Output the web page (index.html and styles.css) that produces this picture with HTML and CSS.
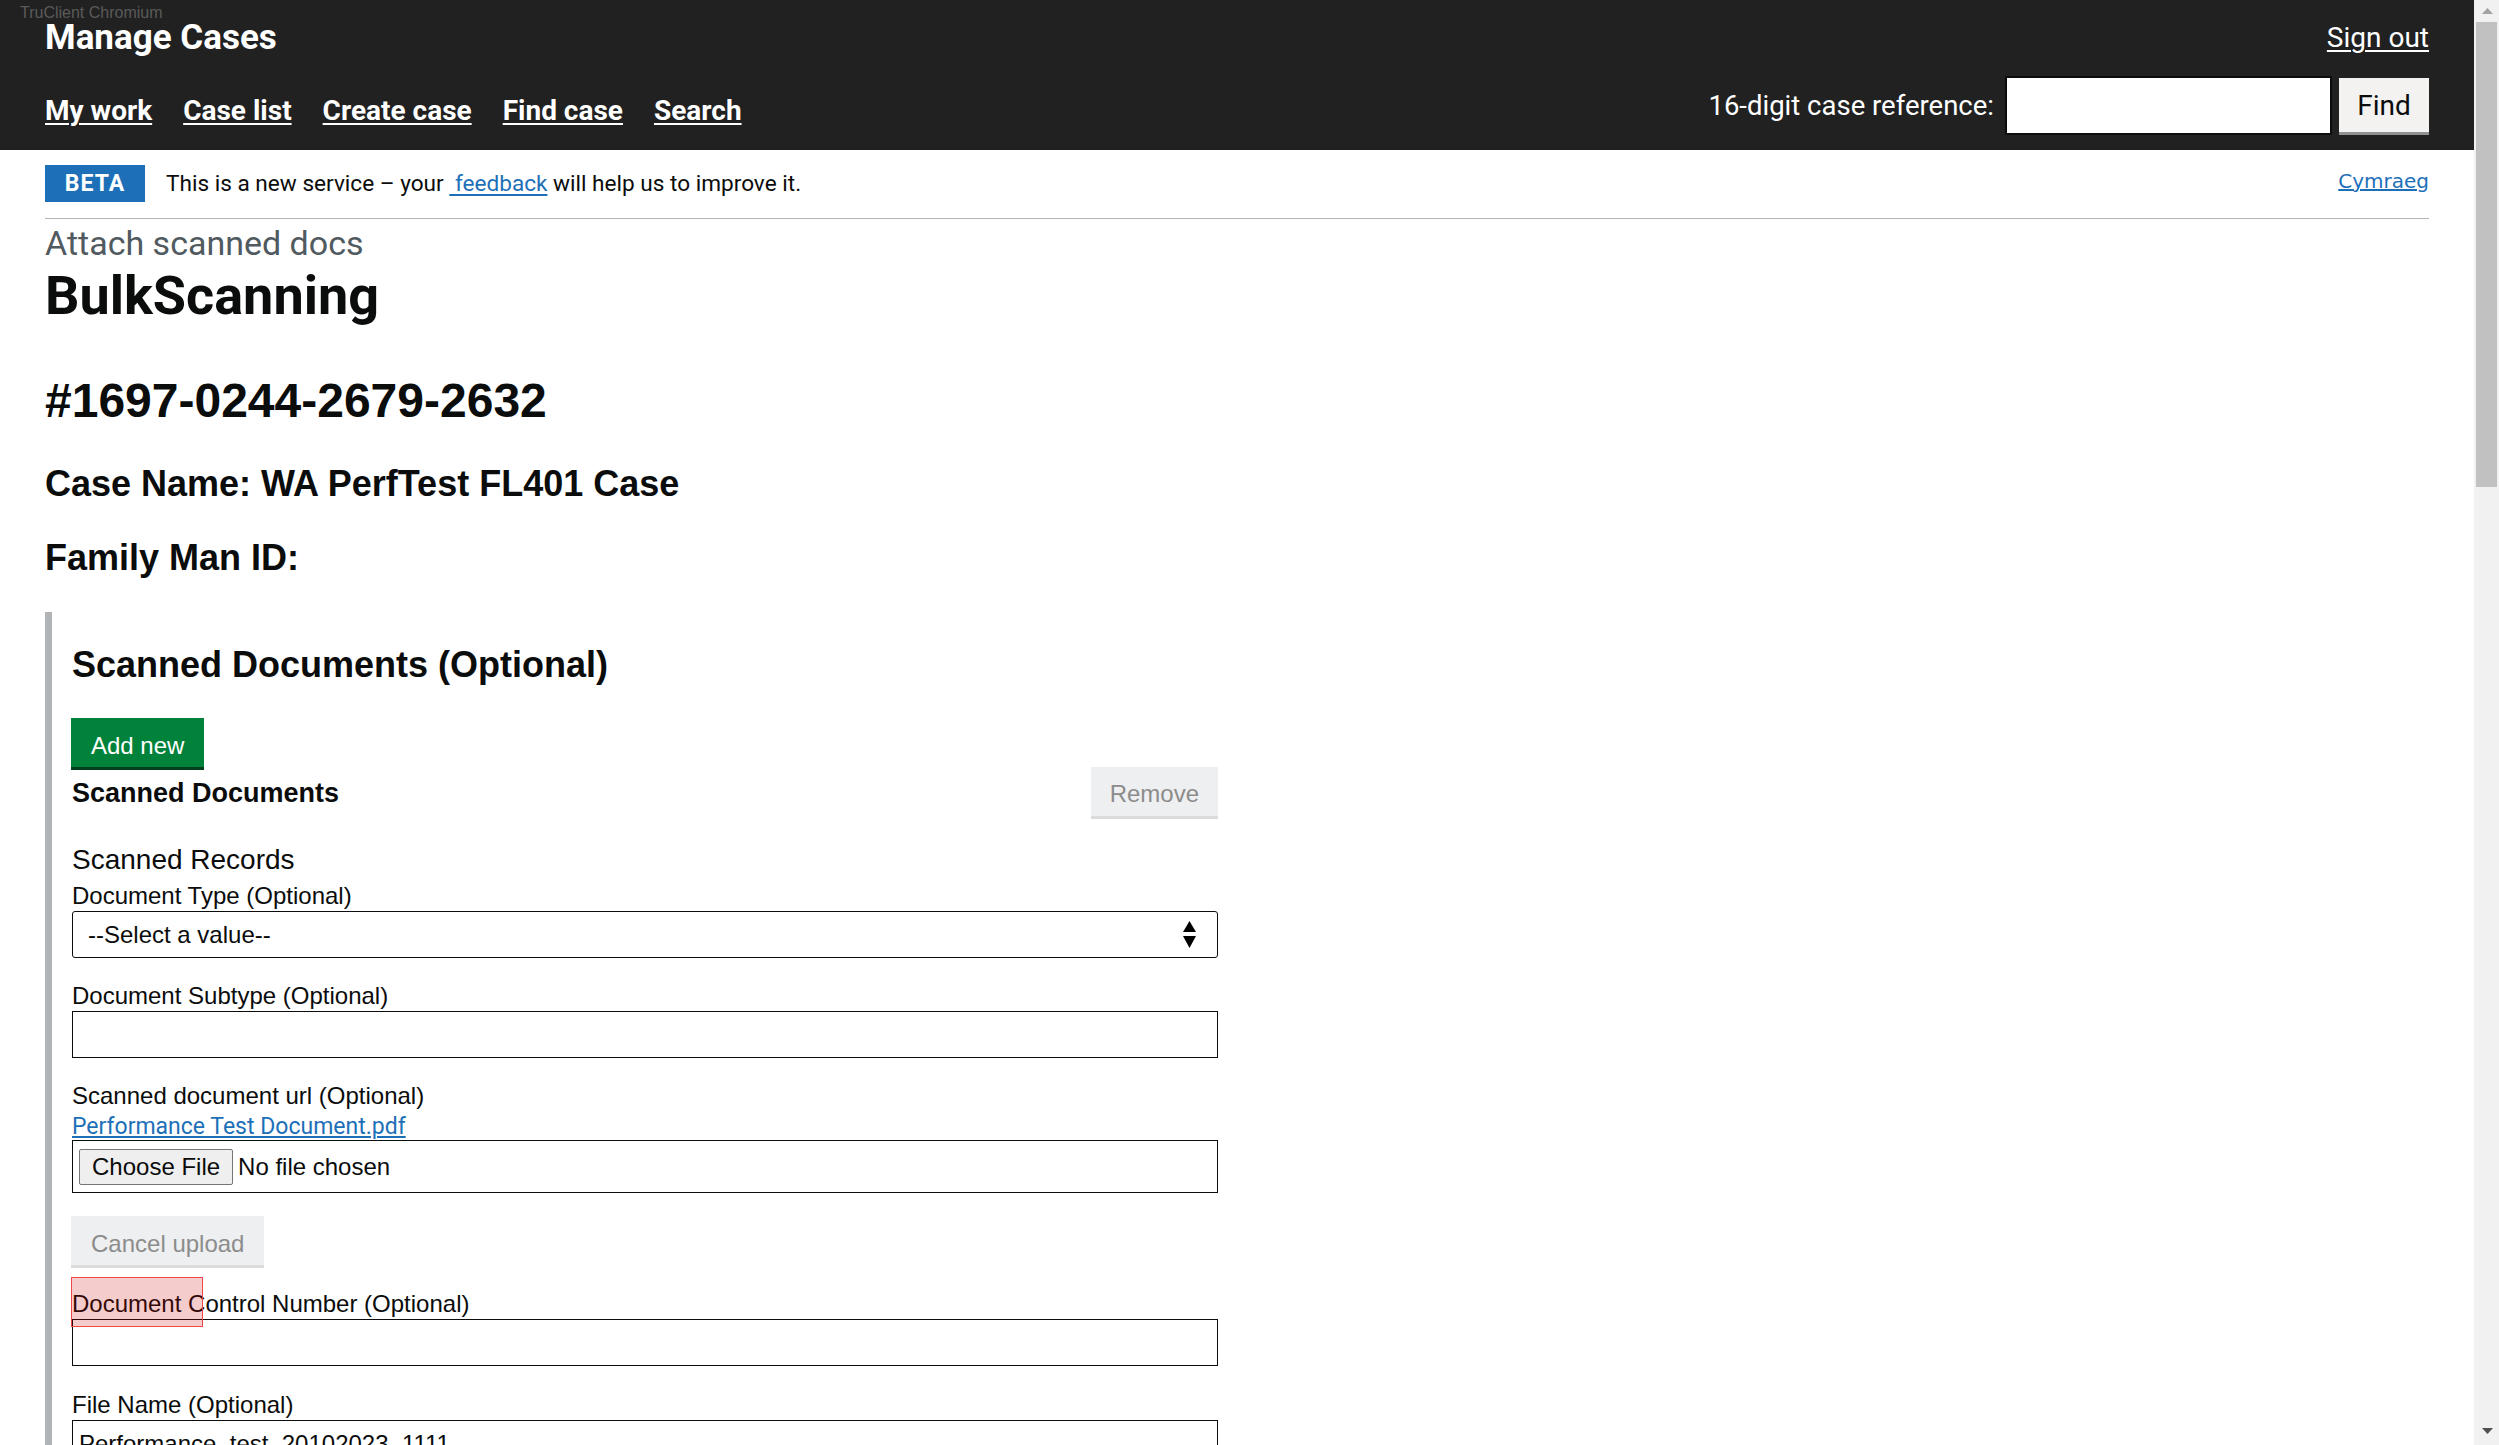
FILE: index.html
```html
<!DOCTYPE html>
<html lang="en">
<head>
<meta charset="utf-8">
<title>Manage Cases</title>
<link rel="stylesheet" href="styles.css">
</head>
<body>
<div class="screen">
  <div class="viewport">
    <header class="hdr">
      <div class="hdr-top">
        <span class="service">Manage Cases</span>
        <a class="signout" href="#">Sign out</a>
      </div>
      <div class="hdr-bottom">
        <nav class="nav">
          <a href="#">My work</a>
          <a href="#">Case list</a>
          <a href="#">Create case</a>
          <a href="#">Find case</a>
          <a href="#">Search</a>
        </nav>
        <form class="caseref">
          <label class="caseref-label" for="cref">16-digit case reference:</label>
          <input class="caseref-input" id="cref" type="text">
          <button class="caseref-btn" type="button">Find</button>
        </form>
      </div>
    </header>
    <div class="container">
      <div class="phase">
        <strong class="tag">BETA</strong>
        <span class="phase-text">This is a new service – your <a class="link" href="#">&nbsp;feedback</a> will help us to improve it.</span>
        <a class="lang" href="#">Cymraeg</a>
      </div>
      <main class="main">
        <span class="caption">Attach scanned docs</span>
        <h1 class="title">BulkScanning</h1>
        <h2 class="case-no">#1697-0244-2679-2632</h2>
        <h3 class="case-meta case-name">Case Name: WA PerfTest FL401 Case</h3>
        <h3 class="case-meta case-fam">Family Man ID:</h3>
        <div class="fieldset">
          <div class="fs-inner">
            <h2 class="fs-title">Scanned Documents (Optional)</h2>
            <button class="btn btn-green" type="button">Add new</button>
            <div class="coll-row">
              <span class="coll-label">Scanned Documents</span>
              <button class="btn btn-disabled" type="button">Remove</button>
            </div>
            <div class="sub-title">Scanned Records</div>
            <div class="group group-first">
              <label class="label">Document Type (Optional)</label>
              <div class="select">
                <span>--Select a value--</span>
                <svg class="select-arrows" width="13" height="27" viewBox="0 0 13 27"><polygon points="6.5,0 13,11 0,11" fill="#000"/><polygon points="0,15 13,15 6.5,27" fill="#000"/></svg>
              </div>
            </div>
            <div class="group">
              <label class="label">Document Subtype (Optional)</label>
              <input class="input" type="text">
            </div>
            <div class="group">
              <label class="label">Scanned document url (Optional)</label>
              <a class="doc-link" href="#">Performance Test Document.pdf</a>
              <div class="file-box">
                <span class="file-btn">Choose File</span>
                <span class="file-none">No file chosen</span>
              </div>
            </div>
            <button class="btn btn-disabled btn-cancel" type="button">Cancel upload</button>
            <div class="group group-dcn">
              <span class="highlight"></span>
              <label class="label">Document Control Number (Optional)</label>
              <input class="input" type="text">
            </div>
            <div class="group group-fn">
              <label class="label">File Name (Optional)</label>
              <input class="input" type="text" value="Performance_test_20102023_1111">
            </div>
          </div>
        </div>
      </main>
    </div>
  </div>
  <div class="scrollbar">
    <div class="sb-btn sb-up"><svg width="11" height="6" viewBox="0 0 11 6"><polygon points="5.5,0 11,6 0,6" fill="#a3a3a3"/></svg></div>
    <div class="sb-track"><div class="sb-thumb"></div></div>
    <div class="sb-btn sb-down"><svg width="11" height="6" viewBox="0 0 11 6"><polygon points="0,0 11,0 5.5,6" fill="#505050"/></svg></div>
  </div>
</div>
<div class="truclient">TruClient Chromium</div>
</body>
</html>
```

FILE: styles.css
```css
* { box-sizing: border-box; }
html, body { margin: 0; padding: 0; height: 100%; overflow: hidden; background: #fff; }
body { font-family: "Liberation Sans", Arial, sans-serif; color: #0b0c0c; }

.screen { display: flex; height: 100vh; }
.viewport { flex: 1; min-width: 0; overflow: hidden; }

/* header */
.hdr { background: #212121; height: 150px; padding: 23px 45px 0; color: #fff; display: flex; flex-direction: column; font-family: Roboto, "Liberation Sans", sans-serif; }
.hdr-top { display: flex; justify-content: space-between; align-items: flex-start; height: 53px; }
.service { font-weight: 700; font-size: 35px; line-height: 30px; }
.signout { margin-top: 0; font-size: 28px; line-height: 30px; color: #fff; text-decoration: underline; text-decoration-thickness: 2px; text-underline-offset: 3px; }
.hdr-bottom { display: flex; justify-content: space-between; align-items: flex-start; }
.nav { display: flex; gap: 31px; margin-top: 19px; }
.nav a { color: #fff; font-weight: 700; font-size: 28px; line-height: 32px; text-decoration: underline; text-decoration-thickness: 2px; text-underline-offset: 3px; }
.caseref { display: flex; align-items: flex-start; margin: 0; }
.caseref-label { font-size: 27.5px; line-height: 59px; margin-right: 11px; }
.caseref-input { width: 327px; height: 59px; border: 2px solid #0b0c0c; background: #fff; margin: 0; padding: 0 6px; font-size: 24px; }
.caseref-btn { width: 90px; height: 54px; margin: 2px 0 0 7px; border: 0; background: #f3f2f1; box-shadow: 0 3px 0 #929191; font-family: Roboto, "Liberation Sans", sans-serif; font-size: 28px; color: #0b0c0c; padding: 0; }

/* container */
.container { padding: 0 45px; }
.phase { display: flex; align-items: center; padding: 15px 0 16px; border-bottom: 1px solid #b1b4b6; font-family: Roboto, "Liberation Sans", sans-serif; }
.tag { display: inline-flex; align-items: center; justify-content: center; width: 100px; height: 37px; background: #1d70b8; color: #fff; font-weight: 700; font-size: 23px; letter-spacing: 1px; margin-right: 21px; }
.phase-text { font-size: 22.6px; line-height: 26px; color: #0b0c0c; }
.link { color: #1d70b8; text-decoration: underline; text-decoration-thickness: 2px; text-underline-offset: 3px; }
.lang { margin-left: auto; align-self: flex-start; margin-top: 4px; font-family: "DejaVu Sans", Verdana, sans-serif; font-size: 20px; line-height: 24px; color: #1d70b8; text-decoration: underline; }

/* main headings */
.main { padding-top: 4px; }
.caption { display: block; font-family: Roboto, "Liberation Sans", sans-serif; font-size: 34px; line-height: 40px; color: #505a5f; }
.title { margin: 4px 0 0; font-family: Roboto, "Liberation Sans", sans-serif; font-weight: 700; font-size: 54px; line-height: 58px; }
.case-no { margin: 48px 0 0; font-size: 48px; line-height: 56px; font-weight: 700; }
.case-meta { margin: 34px 0 0; font-size: 36px; line-height: 42px; font-weight: 700; }
.case-fam { margin-top: 32px; }

/* fieldset */
.fieldset { margin-top: 33px; border-left: 7px solid #b1b4b6; padding: 32px 0 60px 20px; }
.fs-inner { width: 1146px; }
.fs-title { margin: 0; font-size: 36px; line-height: 42px; font-weight: 700; }
.btn { display: inline-block; border: 0; margin: 0; font-family: "Liberation Sans", Arial, sans-serif; font-size: 24px; line-height: 28px; padding: 14px 20px 7px; }
.btn-green { margin-top: 32px; margin-left: -1px; background: #00823b; color: #fff; box-shadow: 0 3px 0 #00401e; }
.btn-disabled { background: #eeeff0; color: #8c8c8c; box-shadow: 0 3px 0 #d9dbdc; }
.coll-row { display: flex; justify-content: space-between; align-items: baseline; }
.coll-row .btn-disabled { padding: 13px 19px 8px; }
.coll-label { font-size: 27px; line-height: 30px; font-weight: 700; }
.sub-title { margin-top: 28px; font-size: 28px; line-height: 32px; }
.group { margin-top: 24px; position: relative; }
.group-first { margin-top: 6px; }
.group-dcn { margin-top: 25px; }
.group-fn { margin-top: 25px; }
.label { display: block; font-size: 24px; line-height: 28px; margin-bottom: 1px; }
.select { display: flex; align-items: center; justify-content: space-between; height: 47px; border: 1px solid #0b0c0c; border-radius: 3px; padding: 0 21px 0 15px; font-size: 24px; }
.input { display: block; width: 100%; height: 47px; margin: 0; border: 1px solid #0b0c0c; padding: 0 6px; font-family: "Liberation Sans", Arial, sans-serif; font-size: 24px; color: #0b0c0c; background: #fff; }
.doc-link { display: block; margin-top: 4px; width: max-content; font-family: Roboto, "Liberation Sans", sans-serif; font-size: 23px; line-height: 26px; color: #1d70b8; text-decoration: underline; text-decoration-thickness: 2px; text-underline-offset: 2px; }
.file-box { display: flex; align-items: center; height: 53px; border: 1px solid #0b0c0c; padding-left: 6px; font-size: 24px; }
.file-btn { display: inline-flex; align-items: center; height: 36px; padding: 0 12px; border: 1px solid #767676; border-radius: 2px; background: #efefef; }
.file-none { margin-left: 5px; }
.btn-cancel { margin-top: 23px; margin-left: -1px; }
.highlight { position: absolute; top: -13px; left: -1px; width: 132px; height: 50px; border: 1px solid #f04848; background: rgba(204, 0, 0, 0.2); }

/* scrollbar */
.scrollbar { width: 25px; flex: none; background: #f1f1f1; display: flex; flex-direction: column; }
.sb-btn { height: 22px; display: flex; justify-content: center; align-items: center; padding-left: 1px; }
.sb-up { align-items: flex-start; padding-top: 8px; }
.sb-down { align-items: flex-end; padding-bottom: 11px; }
.sb-track { flex: 1; padding: 0 2px; }
.sb-thumb { height: 465px; background: #c1c1c1; }

.truclient { position: absolute; top: 5px; left: 20px; font-size: 16px; line-height: 16px; color: #5a5a5a; }
```
